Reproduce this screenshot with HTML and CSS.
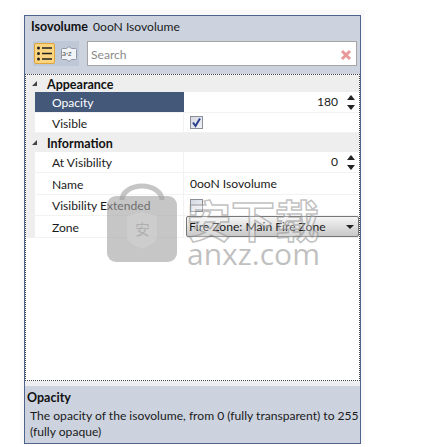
FILE: index.html
```html
<!DOCTYPE html>
<html lang="en">
<head>
    <meta charset="UTF-8">
    <title>Isovolume properties</title>
    <link rel="stylesheet" href="styles.css">
</head>
<body>
    <div class="shell">
        <div class="panel">
            <div class="title"><strong>Isovolume</strong> <span>0ooN Isovolume</span></div>
            <div class="toolbar">
                <div class="sort-buttons">
                    <div class="sort-btn active">
                        <svg width="19" height="19" viewBox="0 0 19 19">
                            <path d="M7 4h10M7 9.500h10M7 15h10" stroke="#222" stroke-width="1.300"/>
                            <circle cx="3.500" cy="4" r="1.500" fill="#222"/>
                            <circle cx="3.500" cy="9.500" r="1.500" fill="#222"/>
                            <circle cx="3.500" cy="15" r="1.500" fill="#222"/>
                        </svg>
                    </div>
                    <div class="sort-btn">
                        <svg width="16" height="18" viewBox="0 0 16 18">
                            <path d="M1.500 3.500h4l2.500-2 2.500 2h4a1 1 0 0 1 1 1v9a1 1 0 0 1-1 1h-4l-2.500 2-2.500-2h-4a1 1 0 0 1-1-1v-9a1 1 0 0 1 1-1z" fill="#f1f3f6" stroke="#8f99a8"/>
                        </svg>
                        <span class="az">a·z</span>
                    </div>
                </div>
                <div class="search">
                    <span>Search</span>
                    <svg width="12" height="12" viewBox="0 0 12 12">
                        <path d="M2 2l8 8M10 2l-8 8" stroke="#e89a9a" stroke-width="3"/>
                    </svg>
                </div>
            </div>
            <div class="grid">
                <div class="category"><i class="arrow"></i>Appearance</div>
                <div class="row tall">
                    <div class="name selected">Opacity</div>
                    <div class="value number">180<span class="spin"><i class="up"></i><i class="down"></i></span></div>
                </div>
                <div class="row">
                    <div class="name">Visible</div>
                    <div class="value"><span class="check on">
                        <svg width="11" height="11" viewBox="0 0 11 11"><path d="M2 5.500l2.500 3.500 4.500-7.500" fill="none" stroke="#2c3f8c" stroke-width="2"/></svg>
                    </span></div>
                </div>
                <div class="category second"><i class="arrow"></i>Information</div>
                <div class="row tall">
                    <div class="name">At Visibility</div>
                    <div class="value number">0<span class="spin"><i class="up"></i><i class="down"></i></span></div>
                </div>
                <div class="row taller">
                    <div class="name">Name</div>
                    <div class="value">0ooN Isovolume</div>
                </div>
                <div class="row tall">
                    <div class="name">Visibility Extended</div>
                    <div class="value"><span class="check"></span></div>
                </div>
                <div class="row taller">
                    <div class="name">Zone</div>
                    <div class="value combo-cell">
                        <div class="combo">Fire Zone: Main Fire Zone<i class="drop"></i></div>
                    </div>
                </div>
            </div>
            <div class="help">
                <strong>Opacity</strong>
                <p>The opacity of the isovolume, from 0 (fully transparent) to 255 (fully opaque)</p>
            </div>
        </div>
    </div>

    <!-- site watermark sits on top of the screenshot -->
    <div class="watermark">
        <div class="wm-lock">
            <svg width="70" height="80" viewBox="0 0 70 80">
                <path d="M15 18a20 14 0 0 1 40 0" fill="none" stroke="#a0a0a0" stroke-opacity=".6" stroke-width="5"/>
                <rect x="0" y="14" width="70" height="66" rx="9" fill="#a0a0a0" fill-opacity=".6"/>
                <path d="M20 34l15-4 15 4v20c0 6-8 10-15 13-7-3-15-7-15-13z" fill="#d0d0d0" fill-opacity=".7"/>
            </svg>
            <span class="wm-mark">安</span>
        </div>
        <div class="wm-text">
            <div class="wm-cn">安下载</div>
            <div class="wm-en">anxz.com</div>
        </div>
    </div>
</body>
</html>
```

FILE: styles.css
```css
body {
    margin: 0;
    background: #fff;
    font-family: Lato, "Open Sans", sans-serif;
    font-size: 12.100px;
    color: #1a1a1a;
    position: relative;
    height: 447px;
    overflow: hidden;
}
strong, .category {
    font-size: 12.500px;
}
.shell {
    width: 345px;
    margin: 10px 0 0 20px;
    padding: 5px 4px 0;
    box-sizing: border-box;
    background: #fafafa;
    height: 434px;
}
.panel {
    height: 429px;
    width: 337px;
    box-sizing: border-box;
    border: 1px solid #4f648c;
    background: #ccd3df;
    display: flex;
    flex-direction: column;
}
.title {
    height: 25px;
    padding: 1px 0 0 6px;
    box-sizing: border-box;
    line-height: 20px;
}
.title strong {
    color: #111;
    margin-right: 2px;
}
.toolbar {
    display: flex;
    gap: 8px;
    height: 33px;
    padding-left: 8px;
}
.sort-buttons {
    display: flex;
    align-items: center;
    gap: 3px;
    width: 46px;
    height: 25px;
    background: #bfc8d6;
}
.sort-btn {
    position: relative;
    width: 21px;
    height: 21px;
    box-sizing: border-box;
    display: flex;
    align-items: center;
    justify-content: center;
}
.sort-btn.active {
    background: #fdd47f;
    border: 1px solid #e0a43c;
    border-radius: 2px;
    margin-left: 1px;
}
.az {
    position: absolute;
    font-size: 8px;
    line-height: 1;
    top: 6px;
    left: 4px;
    color: #555;
}
.search {
    flex: 1;
    height: 25px;
    margin-right: 3px;
    box-sizing: border-box;
    background: #fff;
    border: 1px solid #a5a5a5;
    display: flex;
    align-items: center;
    justify-content: space-between;
    padding: 2px 4px 0 3px;
    color: #8a8a8a;
}
.grid {
    flex: 1;
    background: #fff;
    border: 1px dotted #444;
}
.category {
    height: 17px;
    padding-top: 1px;
    box-sizing: border-box;
    background: #eee;
    font-weight: 700;
    color: #111;
    display: flex;
    align-items: center;
}
.category.second {
    height: 19px;
}
.arrow {
    width: 0;
    height: 0;
    margin: 0 10px 2px 6px;
    border-style: solid;
    border-width: 0 0 5px 5px;
    border-color: transparent transparent #444 transparent;
}
.row {
    display: flex;
    height: 20px;
    line-height: 21px;
    border-left: 9px solid #eee;
    border-bottom: 1px solid #f2f2f2;
    box-sizing: border-box;
}
.row.tall {
    height: 21px;
    line-height: 22px;
}
.row.taller {
    height: 22px;
    line-height: 24px;
}
.name {
    width: 149px;
    flex: none;
    box-sizing: border-box;
    padding-left: 17px;
    border-right: 1px solid #f2f2f2;
}
.name.selected {
    background: #44597a;
    color: #fff;
    border-right: none;
}
.value {
    flex: 1;
    padding-left: 6px;
    display: flex;
    align-items: center;
    min-width: 0;
}
.value.number {
    justify-content: flex-end;
    padding-right: 4px;
}
.spin {
    display: flex;
    flex-direction: column;
    gap: 5px;
    margin-left: 9px;
    width: 8px;
}
.up, .down {
    width: 0;
    height: 0;
    border-left: 4px solid transparent;
    border-right: 4px solid transparent;
}
.up {
    border-bottom: 5px solid #222;
}
.down {
    border-top: 5px solid #222;
}
.check {
    width: 13px;
    height: 13px;
    box-sizing: border-box;
    border: 1px solid #8a8f9a;
    background: linear-gradient(135deg, #d5d8e2, #f2f3f7);
    display: flex;
    align-items: center;
    justify-content: center;
}
.check svg {
    flex: none;
}
.combo-cell {
    padding-left: 2px;
}
.combo {
    width: 100%;
    height: 21px;
    box-sizing: border-box;
    border: 1px solid #777;
    border-radius: 2px;
    background: linear-gradient(#f5f5f5, #dcdcdc 55%, #c8c8c8);
    padding-left: 2px;
    line-height: 20px;
    display: flex;
    justify-content: space-between;
    align-items: center;
}
.drop {
    width: 0;
    height: 0;
    margin-right: 4px;
    border-left: 4px solid transparent;
    border-right: 4px solid transparent;
    border-top: 4px solid #222;
}
.help {
    height: 62px;
    flex: none;
    border-top: 5px solid #eceef2;
    padding: 4px 0 0 2px;
    box-sizing: border-box;
    line-height: 16px;
}
.help strong {
    display: block;
    color: #111;
    margin-bottom: 2px;
}
.help p {
    margin: 0 0 0 3px;
}
.watermark {
    position: absolute;
    left: 107px;
    top: 182px;
    display: flex;
    gap: 10px;
    pointer-events: none;
}
.wm-lock {
    position: relative;
}
.wm-mark {
    position: absolute;
    left: 28px;
    top: 38px;
    font-family: "Noto Sans CJK SC", sans-serif;
    font-size: 15px;
    line-height: 18px;
    color: rgba(150, 150, 150, .55);
}
.wm-text {
    padding-top: 14px;
}
.wm-cn {
    font-family: "Noto Sans CJK SC", sans-serif;
    font-size: 44px;
    line-height: 46px;
    font-weight: 700;
    color: rgba(255, 255, 255, .3);
    -webkit-text-stroke: 1.500px rgba(140, 140, 140, .55);
}
.wm-en {
    font-family: "Open Sans", sans-serif;
    font-size: 30px;
    line-height: 24px;
    color: rgba(150, 150, 150, .6);
}
```
